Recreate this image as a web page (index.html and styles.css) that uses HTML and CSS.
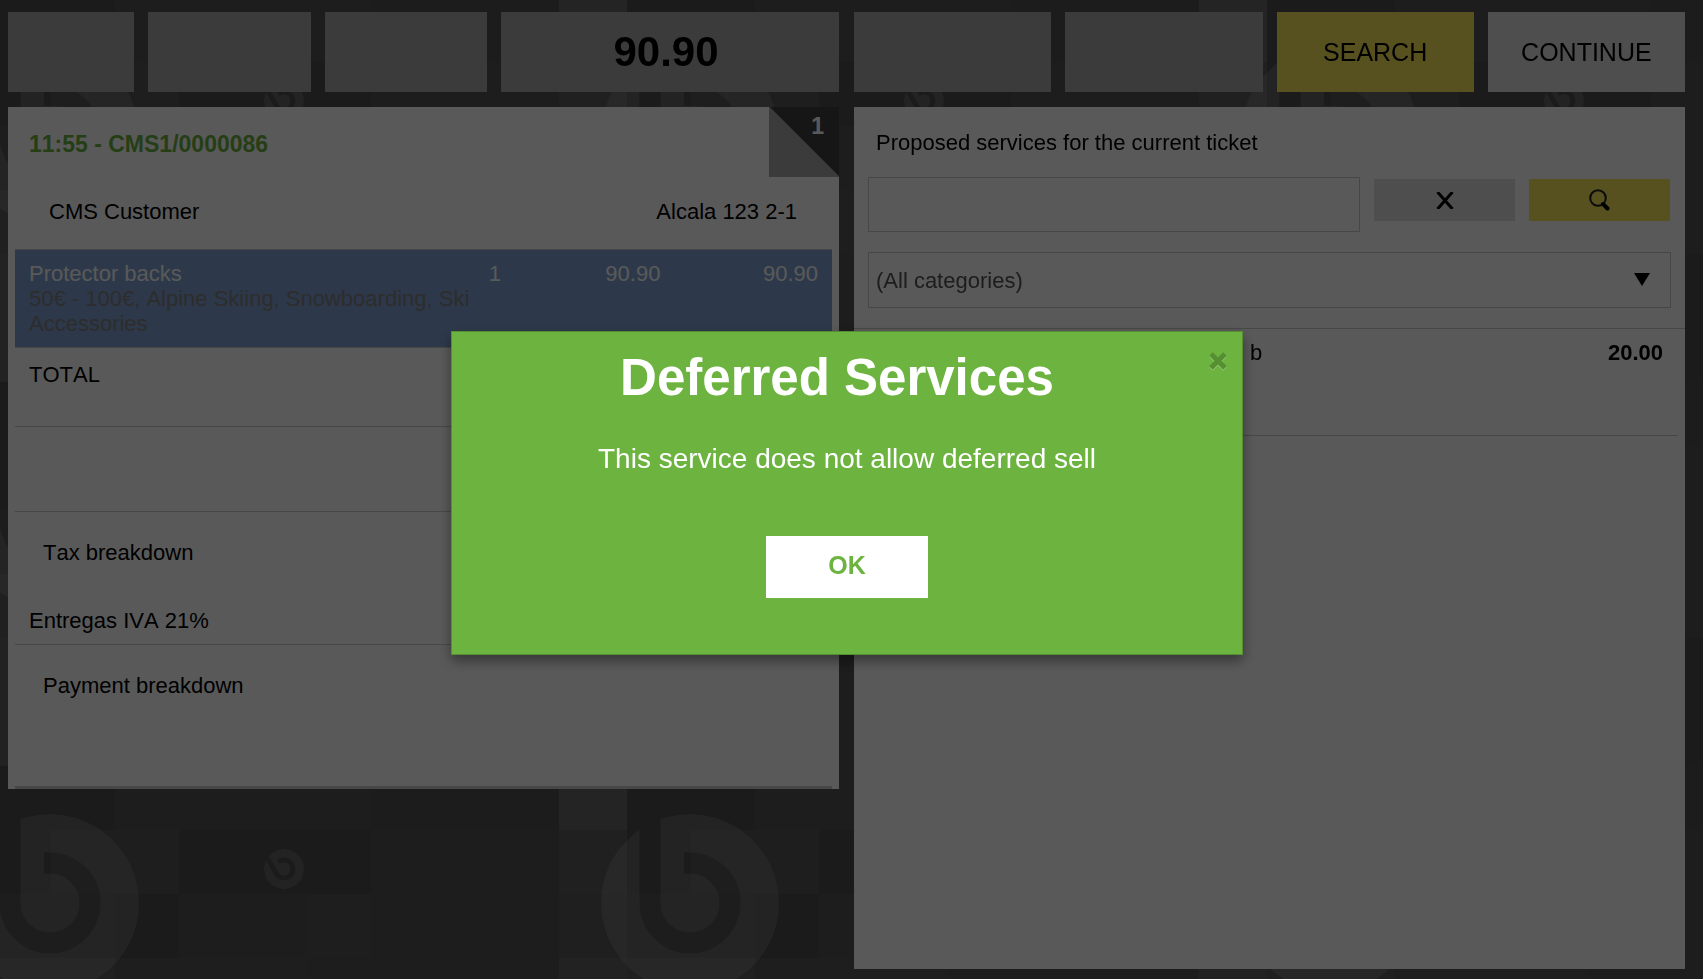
FILE: index.html
```
<!DOCTYPE html>
<html lang="en">
<head>
    <meta charset="UTF-8">
    <meta name="viewport" content="width=device-width, initial-scale=1.0">
    <title>Web POS</title>
    <link rel="stylesheet" href="styles.css">
</head>
<body>
    <!-- repeating logo wallpaper -->
    <svg class="wallpaper" aria-hidden="true">
        <defs>
            <mask id="b-cut">
                <circle r="89" fill="#fff"/>
                <path d="M-40-95V0A40 40 0 1 0 0-40H-6" fill="none" stroke="#000" stroke-width="21"/>
            </mask>
            <g id="b-logo">
                <circle r="89" fill="#fff" fill-opacity=".13" mask="url(#b-cut)"/>
            </g>
            <pattern id="tiles" width="640" height="384" patternUnits="userSpaceOnUse" patternTransform="translate(-13 62)">
                <rect width="640" height="384" fill="#535353"/>
                <rect width="64" height="64" fill="#4d4d4d"/>
                <rect x="64" width="128" height="64" fill="#565656"/>
                <rect x="192" width="192" height="64" fill="#4e4e4e"/>
                <rect x="384" width="128" height="128" fill="#555"/>
                <rect x="128" y="64" width="64" height="64" fill="#4e4e4e"/>
                <rect x="320" y="64" width="64" height="64" fill="#575757"/>
                <rect y="128" width="128" height="64" fill="#5c5c5c"/>
                <rect x="128" y="128" width="192" height="64" fill="#565656"/>
                <rect y="192" width="64" height="128" fill="#636363"/>
                <rect y="320" width="128" height="64" fill="#4d4d4d"/>
                <rect x="384" y="192" width="128" height="128" fill="#4f4f4f"/>
                <rect x="384" y="320" width="188" height="64" fill="#505050"/>
                <rect x="572" width="68" height="64" fill="#5d5d5d"/>
                <rect x="572" y="64" width="68" height="64" fill="#5a5a5a"/>
                <rect x="572" y="128" width="68" height="64" fill="#616161"/>
                <rect x="572" y="192" width="68" height="192" fill="#676767"/>
                <use href="#b-logo" x="63" y="73"/>
                <use href="#b-logo" x="703" y="73"/>
                <use href="#b-logo" x="63" y="457"/>
                <use href="#b-logo" x="703" y="457"/>
                <use href="#b-logo" transform="translate(297 39) rotate(-30) scale(.225)"/>
            </pattern>
        </defs>
        <rect width="100%" height="100%" fill="url(#tiles)"/>
    </svg>

    <main class="pos">
        <div class="toolbar toolbar-left">
            <button class="tile" aria-label="Undo" disabled></button>
            <button class="tile" aria-label="New ticket" disabled></button>
            <button class="tile" aria-label="Delete ticket" disabled></button>
            <button class="tile tile-total">90.90</button>
        </div>
        <div class="toolbar toolbar-right">
            <button class="tile" aria-label="Scan" disabled></button>
            <button class="tile" aria-label="Edit" disabled></button>
            <button class="tile tile-search">SEARCH</button>
            <button class="tile tile-continue">CONTINUE</button>
        </div>

        <section class="panel ticket">
            <div class="ticket-count">1</div>
            <h2 class="ticket-id">11:55 - CMS1/0000086</h2>
            <div class="customer">
                <span>CMS Customer</span>
                <span>Alcala 123 2-1</span>
            </div>
            <table class="lines">
                <tr>
                    <td class="line-name">Protector backs
                        <div class="line-detail">50€ - 100€, Alpine Skiing, Snowboarding, Ski Accessories</div>
                    </td>
                    <td class="line-qty">1</td>
                    <td class="line-price">90.90</td>
                    <td class="line-total">90.90</td>
                </tr>
            </table>
            <div class="row row-total">TOTAL</div>
            <div class="row row-empty"></div>
            <h3 class="breakdown">Tax breakdown</h3>
            <div class="row">Entregas IVA 21%</div>
            <h3 class="breakdown">Payment breakdown</h3>
            <div class="payments"></div>
        </section>

        <section class="panel services">
            <h2 class="services-title">Proposed services for the current ticket</h2>
            <form class="search">
                <input class="search-input" type="text" aria-label="Search services">
                <button class="search-btn" type="reset" aria-label="Clear">
                    <svg width="18" height="17" viewBox="0 0 18 17">
                        <path d="M1.500 0L16.500 17M16.500 0L1.500 17" stroke="#000" stroke-width="3"/>
                    </svg>
                </button>
                <button class="search-btn search-go" type="submit" aria-label="Search">
                    <svg width="21" height="22" viewBox="0 0 21 22">
                        <circle cx="9" cy="9" r="7.800" fill="none" stroke="#222" stroke-width="2"/>
                        <path d="M14 15l4.500 4.500" stroke="#000" stroke-width="4" stroke-linecap="round"/>
                    </svg>
                </button>
            </form>
            <div class="category">
                <select class="category-select" aria-label="Category">
                    <option>(All categories)</option>
                </select>
                <svg class="category-arrow" width="16" height="13" viewBox="0 0 16 13" aria-hidden="true">
                    <path d="M0 0h16L8 13z" fill="#000"/>
                </svg>
            </div>
            <div class="service">
                <span class="service-name">b</span>
                <strong>20.00</strong>
            </div>
        </section>
    </main>

    <div class="overlay">
        <div class="modal" role="dialog" aria-modal="true" aria-labelledby="modal-title">
            <button class="modal-close" aria-label="Close">
                <svg width="18" height="19" viewBox="0 0 18 19">
                    <path d="M2 3l14 14M16 3L2 17" stroke="#98ca79" stroke-width="5"/>
                    <path d="M2 2l14 14M16 2L2 16" stroke="#568f32" stroke-width="5"/>
                </svg>
            </button>
            <h1 class="modal-title" id="modal-title">Deferred Services</h1>
            <p class="modal-text">This service does not allow deferred sell</p>
            <button class="modal-ok">OK</button>
        </div>
    </div>
</body>
</html>
```
FILE: styles.css
```
* {
    margin: 0;
    padding: 0;
    box-sizing: border-box;
}

body {
    font-family: "Liberation Sans", Arial, sans-serif;
    font-size: 22px;
    font-kerning: none;
    line-height: 25px;
    background-color: #535353;
    color: #000;
}

button,
input,
select {
    font: inherit;
    color: inherit;
    border: none;
    border-radius: 0;
}

button {
    cursor: pointer;
}

.wallpaper {
    position: fixed;
    top: 0;
    left: 0;
    width: 100%;
    height: 100%;
    z-index: -1;
}

.pos {
    min-height: 100vh;
    display: grid;
    grid-template-columns: 1fr 1fr;
    grid-template-rows: 80px 1fr;
    gap: 15px;
    padding: 12px 18px 10px 8px;
}

/* toolbar */
.toolbar {
    display: grid;
    gap: 14px;
}

.toolbar-left {
    grid-template-columns: 126fr 163fr 162fr 338fr;
}

.toolbar-right {
    grid-template-columns: repeat(4, 1fr);
}

.tile {
    background-color: #a8a8a8;
    font-size: 25px;
}

.tile-total {
    padding: 0 8px 2px 0;
    font-size: 42px;
    font-weight: bold;
}

.tile-search {
    background-color: #f9e45b;
}

.tile-continue {
    background-color: #e0e0e0;
}

/* ticket */
.panel {
    background-color: #fff;
}

.ticket {
    position: relative;
    align-self: start;
    padding: 25px 7px 0;
}

.ticket-count {
    position: absolute;
    top: 0;
    right: 0;
    width: 70px;
    height: 70px;
    padding: 7px 15px;
    background: linear-gradient(to top right, #a8a8a8 50%, #404040 51%);
    color: #fff;
    font-size: 23px;
    font-weight: bold;
    text-align: right;
}

.ticket-id {
    padding-left: 14px;
    color: #6cb33f;
    font-size: 23px;
}

.customer {
    display: flex;
    justify-content: space-between;
    padding: 42px 35px 25px 34px;
}

.lines {
    width: 100%;
    table-layout: fixed;
    border-spacing: 0;
    background-color: #81a3d3;
    border-top: 1px solid #ccc;
    border-bottom: 1px solid #ccc;
    color: #fff;
}

.lines td {
    padding: 11px 0;
    text-align: right;
    vertical-align: top;
}

.lines .line-name {
    width: 57.5%;
    padding-left: 14px;
    text-align: left;
}

.line-detail {
    color: #808080;
}

.line-qty {
    width: 2%;
}

.line-price {
    width: 19.5%;
}

.lines .line-total {
    padding-right: 14px;
}

.row {
    padding: 14px 14px 11px;
    border-bottom: 1px solid #ccc;
}

.row-total {
    padding-bottom: 39px;
}

.row-empty {
    height: 85px;
}

.breakdown {
    padding: 28px 28px 29px;
    font-size: 22px;
    font-weight: normal;
}

.payments {
    height: 62px;
    border-bottom: 3px solid #ccc;
}

/* services */
.services {
    padding-top: 23px;
}

.services-title {
    padding: 0 22px;
    font-size: 22px;
    font-weight: normal;
}

.search {
    display: flex;
    gap: 14px;
    padding: 22px 15px 20px 14px;
}

.search-input {
    flex: 1;
    min-width: 0;
    height: 55px;
    padding: 0 8px;
    background-color: #fff;
    border: 1px solid #ccc;
}

.search-btn {
    display: flex;
    align-items: center;
    justify-content: center;
    width: 141px;
    height: 42px;
    margin-top: 2px;
    background-color: #e0e0e0;
}

.search-go {
    background-color: #f9e45b;
}

.category {
    position: relative;
    padding: 0 14px 20px;
    border-bottom: 1px solid #ccc;
}

.category-select {
    display: block;
    width: 100%;
    height: 56px;
    padding: 0 7px;
    appearance: none;
    background-color: #fff;
    border: 1px solid #ccc;
    color: #555;
}

.category-arrow {
    position: absolute;
    top: 21px;
    right: 35px;
    pointer-events: none;
}

.service {
    display: flex;
    justify-content: space-between;
    min-height: 107px;
    margin: 0 7px;
    padding: 11px 15px 0 0;
    border-bottom: 1px solid #ccc;
}

.service-name {
    padding-left: 48.5%;
}

/* dialog */
.overlay {
    position: fixed;
    inset: 0;
    display: flex;
    align-items: center;
    justify-content: center;
    padding: 7px 9px 0 0;
    background-color: rgba(0, 0, 0, 0.65);
}

.modal {
    position: relative;
    width: 46.5vw;
    padding: 19px 20px 56px;
    background-color: #6cb33f;
    border: 1px solid #568f32;
    box-shadow: 0 6px 12px rgba(0, 0, 0, 0.4);
    color: #fff;
    text-align: center;
}

.modal-close {
    position: absolute;
    top: 20px;
    right: 15px;
    background: none;
    line-height: 0;
}

.modal-title {
    padding-right: 20px;
    font-size: 51px;
    line-height: 54px;
}

.modal-text {
    padding: 38px 0 61px;
    font-size: 28px;
    line-height: 32px;
}

.modal-ok {
    width: 162px;
    height: 62px;
    padding-bottom: 4px;
    background-color: #fff;
    color: #6cb33f;
    font-size: 25px;
    font-weight: bold;
}
```
